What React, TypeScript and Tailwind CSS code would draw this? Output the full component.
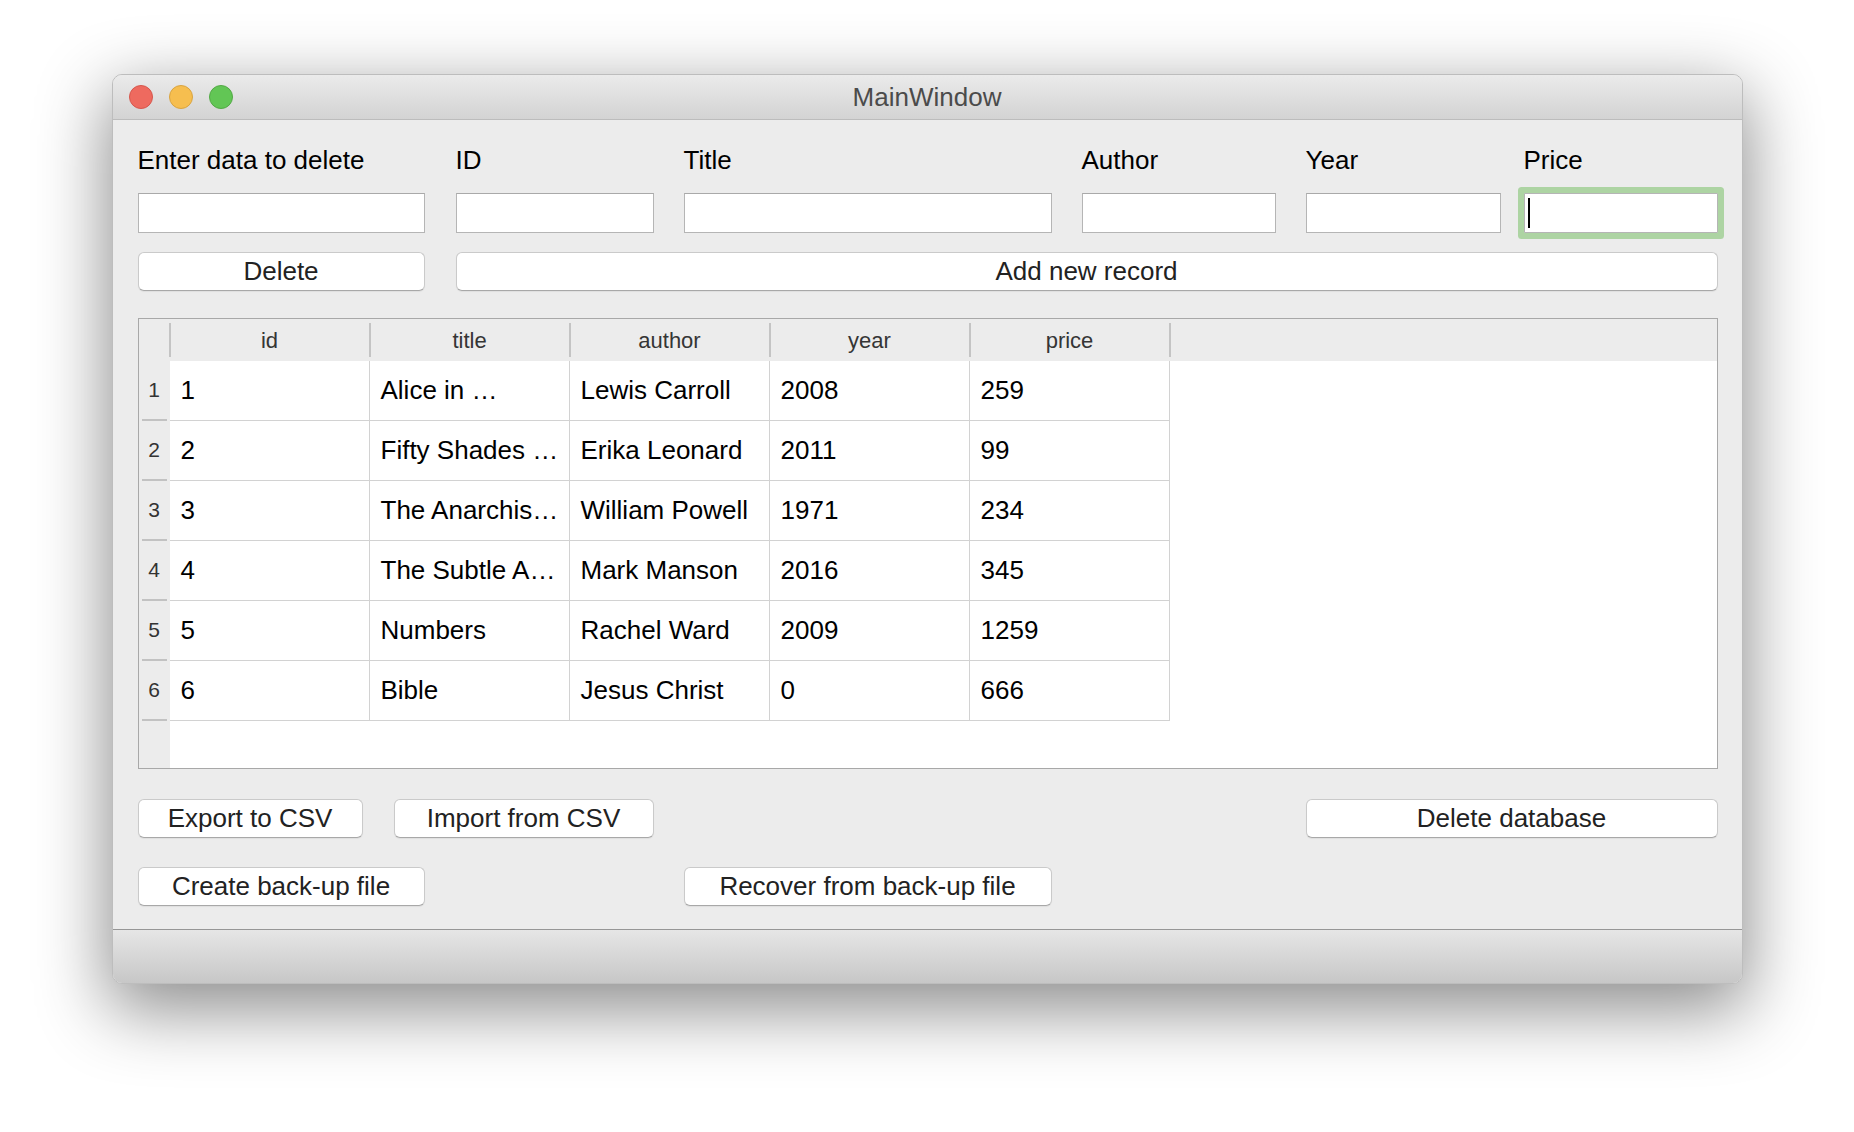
const COLUMNS = ["id", "title", "author", "year", "price"];

const BOOKS = [
  ["1", "Alice in …", "Lewis Carroll", "2008", "259"],
  ["2", "Fifty Shades …", "Erika Leonard", "2011", "99"],
  ["3", "The Anarchis…", "William Powell", "1971", "234"],
  ["4", "The Subtle A…", "Mark Manson", "2016", "345"],
  ["5", "Numbers", "Rachel Ward", "2009", "1259"],
  ["6", "Bible", "Jesus Christ", "0", "666"],
];

type ButtonProps = {
  label: string;
  className?: string;
};

function MacButton({ label, className = "" }: ButtonProps) {
  return (
    <div
      className={
        "h-[39px] flex items-center justify-center rounded-[6px] bg-white border border-[#cacaca] border-b-[#a8a8a8] text-[26px] text-[#222] shadow-[0_1px_1px_rgba(0,0,0,0.06)] " +
        className
      }
    >
      {label}
    </div>
  );
}

function LineEdit({ className = "" }: { className?: string }) {
  return <div className={"h-[40px] bg-white border border-[#b5b5b5] border-t-[#a9a9a9] " + className} />;
}

function Light({ color }: { color: string }) {
  return <div className={"w-[24px] h-[24px] rounded-full " + color} />;
}

function BooksTable() {
  return (
    <div className="mt-[27px] h-[451px] flex flex-col bg-white border border-[#a8a8a8]">
      <div className="h-[42px] flex items-center bg-[#ececec] text-[22px] text-[#353535]">
        <div className="w-[30px]" />
        {COLUMNS.map((c) => (
          <div key={c} className="w-[200px] h-full flex items-center">
            <div className="w-[2px] h-[34px] bg-[#c4c4c4]" />
            <div className="flex-1 text-center">{c}</div>
          </div>
        ))}
        <div className="w-[2px] h-[34px] bg-[#c4c4c4]" />
      </div>
      <div className="flex-1 flex">
        <div className="w-[31px] bg-[#ececec] flex flex-col">
          {BOOKS.map((b) => (
            <div key={b[0]} className="h-[60px] flex flex-col">
              <div className="flex-1 flex items-center justify-center text-[21px] text-[#333]">{b[0]}</div>
              <div className="h-[2px] mx-[3px] bg-[#c2c2c2]" />
            </div>
          ))}
        </div>
        <div className="flex flex-col">
          {BOOKS.map((b) => (
            <div key={b[0]} className="h-[60px] flex border-b border-[#d2d2d2]">
              {b.map((cell, i) => (
                <div
                  key={i}
                  className="w-[200px] flex items-center pl-[11px] border-r border-[#d2d2d2] text-[26px] text-black whitespace-nowrap overflow-hidden"
                >
                  {cell}
                </div>
              ))}
            </div>
          ))}
        </div>
      </div>
    </div>
  );
}

export default function App() {
  return (
    <div className="min-h-screen bg-white flex justify-center pt-[74px] font-['Liberation_Sans',Arial,sans-serif]">
      <div className="w-[1631px] h-fit flex flex-col rounded-[10px] overflow-hidden border border-[#bdbdbd] bg-[#ececec] shadow-[0_22px_70px_4px_rgba(0,0,0,0.45)]">
        <div className="h-[45px] grid grid-cols-[1fr_auto_1fr] items-center border-b border-[#bcbcbc] bg-gradient-to-b from-[#ebebeb] to-[#d3d3d3]">
          <div className="flex gap-[16px] pl-[16px]">
            <Light color="bg-[#ee6a5f] border border-[#d6574d]" />
            <Light color="bg-[#f6be4f] border border-[#d9a441]" />
            <Light color="bg-[#62c655] border border-[#53a946]" />
          </div>
          <div className="text-[26px] text-[#4b4b4b]">MainWindow</div>
          <div />
        </div>

        <div className="pl-[25px] pr-[24px] pt-[25px] pb-[23px]">
          <div className="flex h-[30px] leading-[30px] text-[26px] text-black">
            <div className="w-[287px]">Enter data to delete</div>
            <div className="ml-[31px] w-[198px]">ID</div>
            <div className="ml-[30px] w-[368px]">Title</div>
            <div className="ml-[30px] w-[194px]">Author</div>
            <div className="ml-[30px] w-[195px]">Year</div>
            <div className="ml-[23px] w-[194px]">Price</div>
          </div>

          <div className="mt-[18px] flex">
            <LineEdit className="w-[287px]" />
            <LineEdit className="ml-[31px] w-[198px]" />
            <LineEdit className="ml-[30px] w-[368px]" />
            <LineEdit className="ml-[30px] w-[194px]" />
            <LineEdit className="ml-[30px] w-[195px]" />
            <div className="ml-[23px] w-[194px] h-[40px] flex items-center pl-[3px] bg-white border border-[#b5b5b5] rounded-[1px] shadow-[0_0_0_6px_#add4a3]">
              <div className="w-[2px] h-[30px] bg-black" />
            </div>
          </div>

          <div className="mt-[19px] flex">
            <MacButton label="Delete" className="w-[287px]" />
            <MacButton label="Add new record" className="ml-[31px] flex-1" />
          </div>

          <BooksTable />

          <div className="mt-[30px] flex">
            <MacButton label="Export to CSV" className="w-[225px]" />
            <MacButton label="Import from CSV" className="ml-[31px] w-[260px]" />
            <div className="flex-1" />
            <MacButton label="Delete database" className="w-[412px]" />
          </div>

          <div className="mt-[29px] flex">
            <MacButton label="Create back-up file" className="w-[287px]" />
            <MacButton label="Recover from back-up file" className="ml-[259px] w-[368px]" />
          </div>
        </div>

        <div className="h-[54px] border-t border-[#969696] bg-gradient-to-b from-[#e6e6e6] to-[#c7c7c7]" />
      </div>
    </div>
  );
}
